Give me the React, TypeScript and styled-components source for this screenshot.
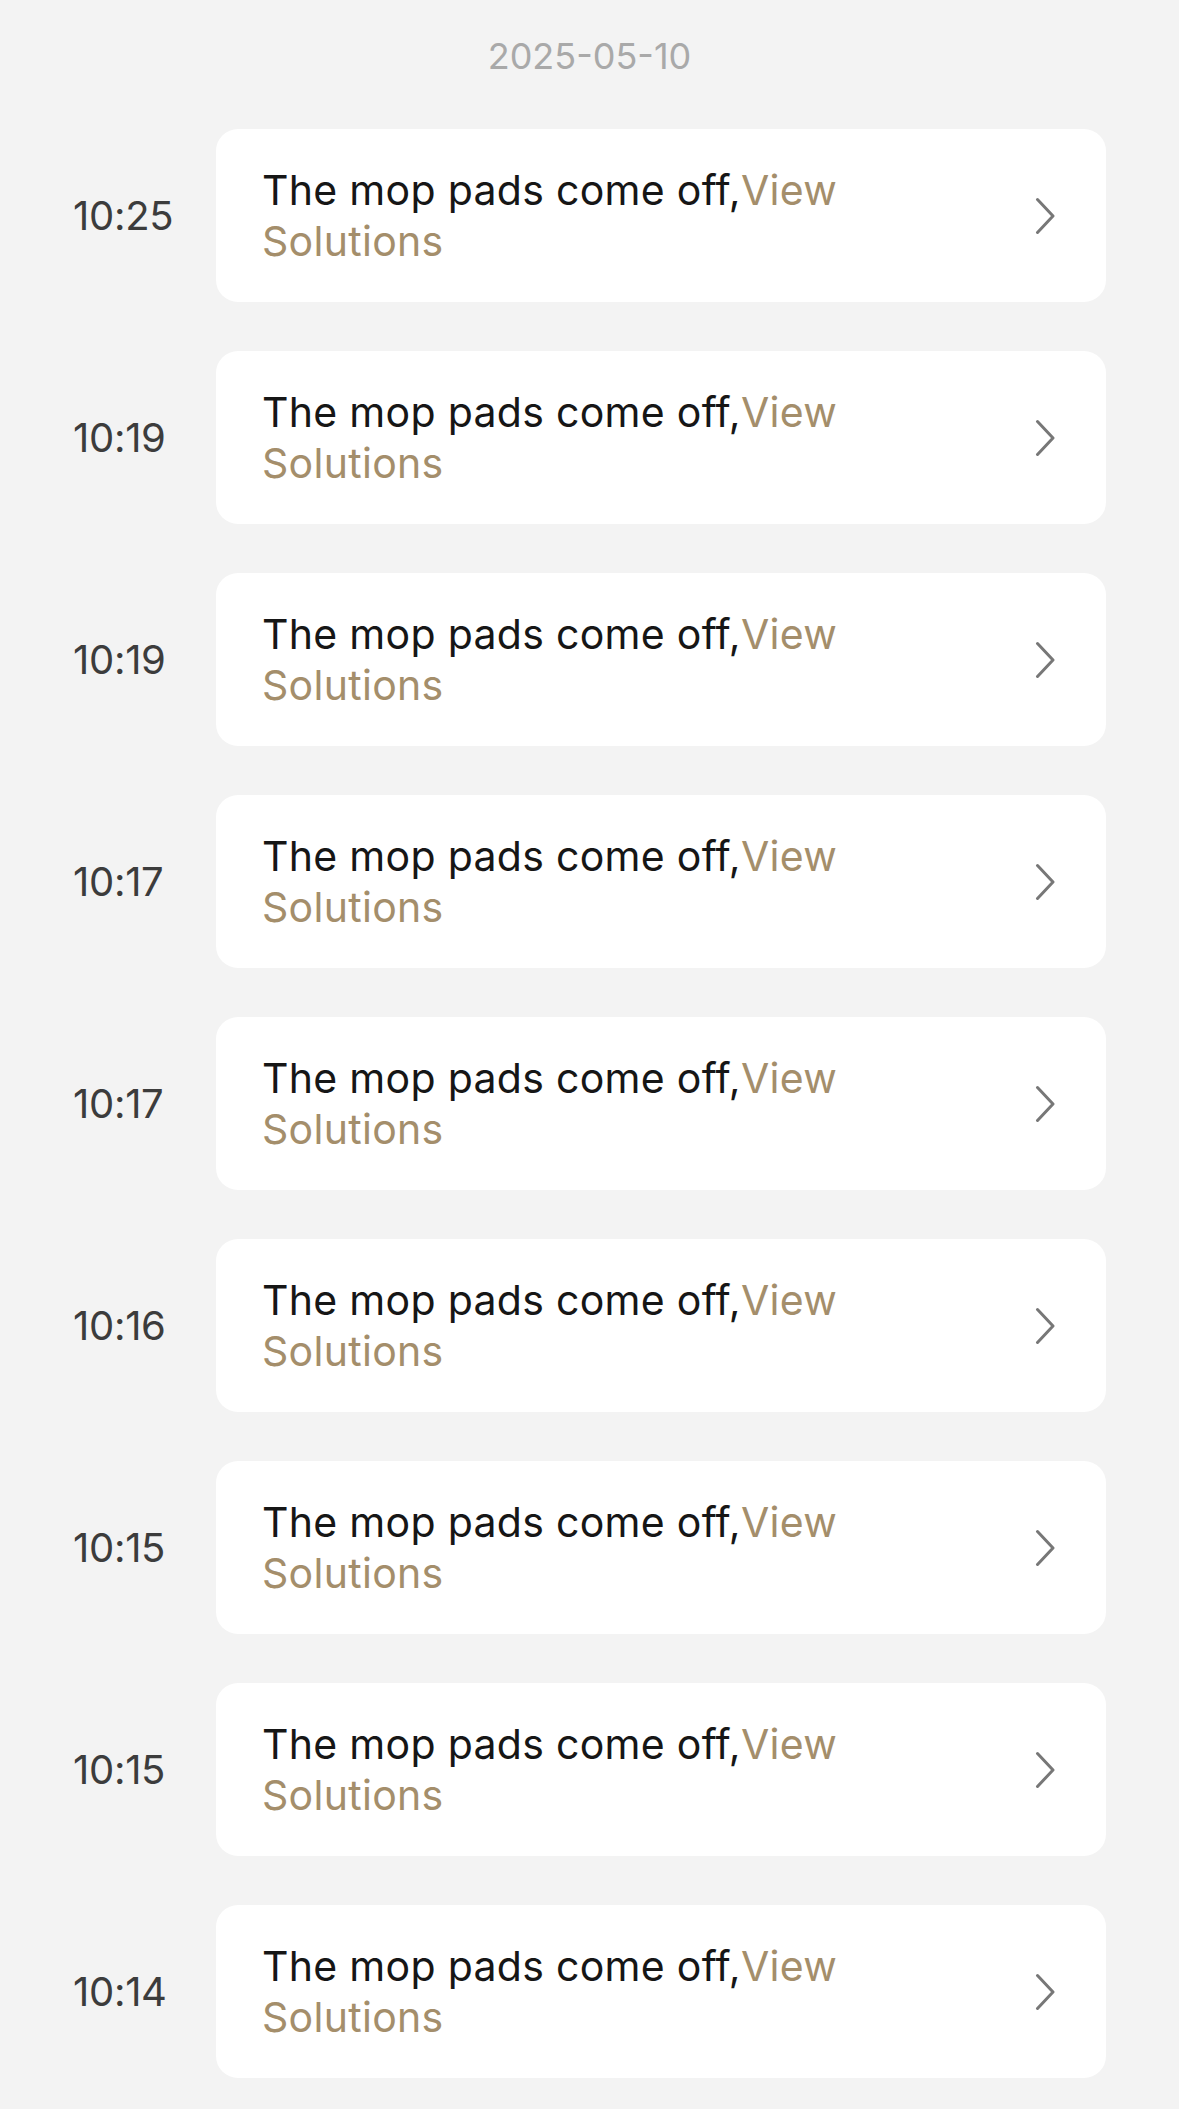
import React from "react";
import styled, { createGlobalStyle } from "styled-components";

const GlobalStyle = createGlobalStyle`
  html, body {
    margin: 0;
    padding: 0;
    background: #f3f3f3;
  }
  body {
    font-family: Inter, "Noto Sans", Roboto, sans-serif;
    -webkit-font-smoothing: antialiased;
  }
`;

const Page = styled.div`
  min-height: 2109px;
  background: #f3f3f3;
  padding: 34px 73px 0;
  box-sizing: border-box;
`;

const DateLabel = styled.div`
  text-align: center;
  font-size: 36px;
  line-height: 44px;
  color: #a9a9a9;
  margin-bottom: 51px;
`;

const List = styled.div`
  display: flex;
  flex-direction: column;
  gap: 49px;
`;

const Row = styled.div`
  display: flex;
  align-items: center;
`;

const Time = styled.div`
  width: 143px;
  flex-shrink: 0;
  font-size: 40px;
  color: #3c3c3c;
  letter-spacing: -0.3px;
`;

const Card = styled.div`
  flex: 1;
  height: 173px;
  box-sizing: border-box;
  background: #ffffff;
  border-radius: 22px;
  padding: 0 51px 0 46px;
  display: flex;
  align-items: center;
  justify-content: space-between;
`;

const Message = styled.div`
  width: 620px;
  font-size: 41px;
  line-height: 51px;
  letter-spacing: 0.3px;
  color: #161616;
`;

const Link = styled.span`
  color: #a48e6b;
`;

const Chevron = styled.svg`
  width: 20px;
  height: 38px;
  flex-shrink: 0;
`;

const ChevronIcon = () => (
  <Chevron viewBox="0 0 20 38">
    <path d="M2.5 2.5 L18 19 L2.5 35.5" fill="none" stroke="#777777" strokeWidth="3" strokeLinecap="round" strokeLinejoin="round" />
  </Chevron>
);

const times = ["10:25", "10:19", "10:19", "10:17", "10:17", "10:16", "10:15", "10:15", "10:14"];

export default function App() {
  return (
    <>
      <GlobalStyle />
      <Page>
        <DateLabel>2025-05-10</DateLabel>
        <List>
          {times.map((t, i) => (
            <Row key={i}>
              <Time>{t}</Time>
              <Card>
                <Message>
                  The mop pads come off,<Link>View Solutions</Link>
                </Message>
                <ChevronIcon />
              </Card>
            </Row>
          ))}
        </List>
      </Page>
    </>
  );
}
